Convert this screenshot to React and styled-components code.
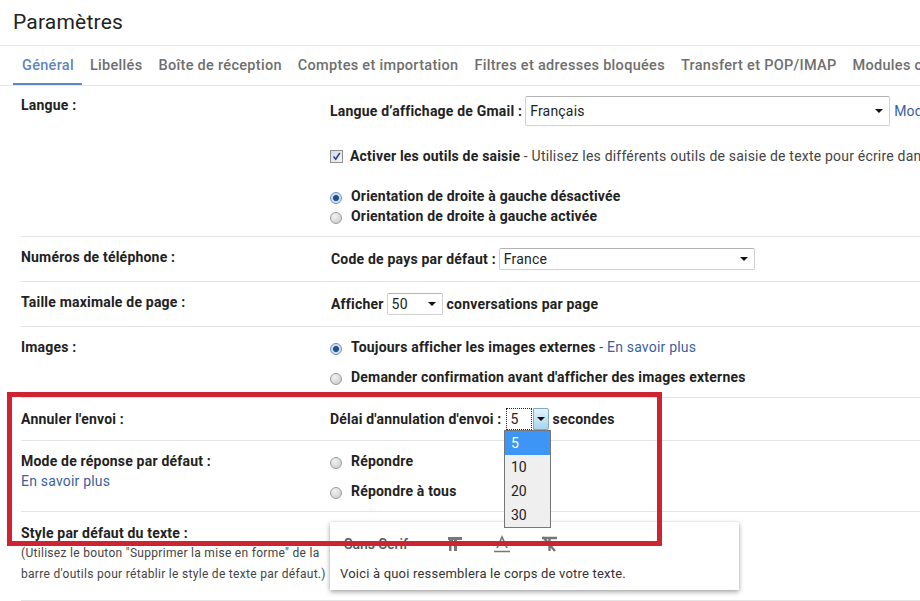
import React from 'react';
import styled, { createGlobalStyle } from 'styled-components';

const Global = createGlobalStyle`
  html, body { margin: 0; padding: 0; background: #fff; overflow: hidden; height: 601px; }
  body { font-family: Roboto, "Liberation Sans", sans-serif; color: #222; font-size: 14px; }
`;
const Page = styled.div`position: relative; width: 920px; height: 601px; overflow: hidden;`;
const Title = styled.h1`
  margin: 0; height: 46px; box-sizing: border-box; padding: 9px 0 0 13px;
  font-size: 21px; line-height: 26px; font-weight: 400; color: #222; letter-spacing: .2px;
  border-bottom: 1px solid #e9e9e9;
`;
const Tabs = styled.nav`
  display: flex; height: 40px; padding-left: 13px; box-sizing: border-box;
  border-bottom: 1px solid #e6e6e6; white-space: nowrap; overflow: hidden;
`;
const Tab = styled.div`
  height: 39px; box-sizing: border-box; padding: 1px 8px 0; margin-left: ${p => p.$active ? '0' : '0'};
  line-height: 38px; font-size: 14.5px; font-weight: 500; letter-spacing: .3px;
  color: ${p => p.$active ? '#5f86bd' : '#6f6f6f'};
  border-bottom: ${p => p.$active ? '2px solid #5f86bd' : '0'};
  flex: none;
  &:first-child { padding-left: 9px; }
`;
const Row = styled.section`
  display: grid; grid-template-columns: 309px 1fr; margin-left: 21px;
  height: ${p => p.$h}px; border-bottom: 1px solid #e4e4e4;
  box-sizing: border-box; white-space: nowrap; letter-spacing: .2px;
`;
const Label = styled.div`padding-top: ${p => p.$top}px; line-height: 20px;`;
const Strong = styled.div`font-weight: 700; font-size: 14px; color: #222;`;
const Link = styled.a`color: #3a5f9f; font-weight: 400;`;
const Hint = styled.div`font-size: 12px; line-height: 21px; color: #444; letter-spacing: .3px;`;
const Values = styled.div`display: flex; flex-direction: column; padding-top: ${p => p.$top}px; min-width: 0;`;
const Line = styled.div`
  display: flex; align-items: center; height: ${p => p.$h || 20}px; margin-top: ${p => p.$mt || 0}px;
  margin-left: ${p => p.$ml || 0}px; gap: 4px;
  font-weight: 700; color: #222;
`;
const Plain = styled.span`font-weight: 400; color: #444;`;
const Select = styled.div`
  display: flex; align-items: center; justify-content: space-between; box-sizing: border-box;
  width: ${p => p.$w}px; height: ${p => p.$h || 22}px; padding: 0 6px 0 4px; margin-left: -1px;
  border: 1px solid #d0d0d0; border-top-color: #b4b4b4; border-radius: 2px; background: #fff;
  font-weight: 400; color: #222; flex: none;
`;
const Arrow = styled.i`width: 0; height: 0; border: 4px solid transparent; border-top: 4px solid #111; border-bottom: 0; display: block;`;
const FocusSelect = styled.div`
  display: flex; gap: 1px; width: 43px; height: 22px; box-sizing: border-box; flex: none;
`;
const FocusValue = styled.div`
  flex: 1; box-sizing: border-box; border: 1px dotted #222; font-weight: 400; padding-left: 4px; line-height: 20px; height: 22px;
`;
const FocusBtn = styled.div`
  width: 16px; height: 22px; box-sizing: border-box; display: flex; align-items: center; justify-content: center;
  border: 1px solid #7fa8c9; border-radius: 0 2px 2px 0; background: linear-gradient(#e5f3fb, #a9d4ee);
`;
const Menu = styled.ul`
  position: absolute; left: 504px; top: 430px; width: 47px; margin: 0; padding: 0; list-style: none;
  background: #efefef; border: 1px solid #767676; box-sizing: border-box; z-index: 3;
`;
const Option = styled.li`
  height: 24px; line-height: 24px; padding-left: 6px; font-size: 14px; color: ${p => p.$on ? '#fff' : '#222'};
  background: ${p => p.$on ? '#3d96f5' : 'transparent'};
`;
const Check = styled.span`
  display: block; width: 13px; height: 13px; box-sizing: border-box; flex: none; margin-right: 3px;
  border: 1px solid #8e8f8f; background: linear-gradient(135deg, #d4d8e8, #f5f6fa);
  position: relative;
  svg { position: absolute; left: 1px; top: 1px; }
`;
const Radio = styled.span`
  display: block; width: 12px; height: 12px; border-radius: 50%; box-sizing: border-box; flex: none; margin: 3px 5px 0 0;
  border: 1px solid ${p => p.$on ? '#6b8db5' : '#9c9c9c'};
  background: ${p => p.$on ? 'radial-gradient(circle, #1f4f86 0 2.6px, #c9dcf0 3.4px, #e6eff8 100%)' : 'radial-gradient(circle at 35% 30%, #f2f2f2, #c8c8c8)'};
`;
const Card = styled.div`
  position: absolute; left: 330px; top: 522px; width: 409px; height: 68px; background: #fff; z-index: 1;
  box-shadow: 0 2px 5px rgba(0,0,0,.35), 0 0 2px rgba(0,0,0,.08);
  display: flex; flex-direction: column; box-sizing: border-box; padding: 12px 10px 0;
`;
const Toolbar = styled.div`display: flex; align-items: center; height: 20px;`;
const Font = styled.span`width: 105px; padding-left: 4px; color: #555; font-weight: 500; font-size: 14px; box-sizing: border-box;`;
const Tool = styled.span`display: flex; width: 47px; height: 20px; align-items: center;`;
const Sample = styled.div`margin-top: 12px; font-size: 13px; color: #333; letter-spacing: .2px;`;
const RedBox = styled.div`
  position: absolute; left: 7px; top: 392px; width: 655px; height: 154px; box-sizing: border-box;
  border: 5px solid #cf2331; z-index: 4; pointer-events: none;
`;

const checkMark = (
  <svg width="9" height="9" viewBox="0 0 9 9"><path d="M1.5 4.5 L3.7 7.2 L7.8 1" fill="none" stroke="#2b3f8c" strokeWidth="1.5" /></svg>
);

export default function App() {
  return (
    <Page>
      <Global />
      <Title>Paramètres</Title>
      <Tabs>
        <Tab $active>Général</Tab>
        <Tab>Libellés</Tab>
        <Tab>Boîte de réception</Tab>
        <Tab>Comptes et importation</Tab>
        <Tab>Filtres et adresses bloquées</Tab>
        <Tab>Transfert et POP/IMAP</Tab>
        <Tab>Modules complémentaires</Tab>
      </Tabs>
      <Row $h={151}>
        <Label $top={9}><Strong>Langue :</Strong></Label>
        <Values $top={10}>
          <Line $h={30}>
            <span>Langue d’affichage de Gmail :</span>
            <Select $w={365} $h={30}>Français<Arrow /></Select>
            <Link>Modifier</Link>
          </Line>
          <Line $mt={20} $h={20}>
            <Check>{checkMark}</Check>
            <span>Activer les outils de saisie<Plain> - Utilisez les différents outils de saisie de texte pour écrire dans la langue de votre choix</Plain></span>
          </Line>
          <Line $mt={20}><Radio $on /><span>Orientation de droite à gauche désactivée</span></Line>
          <Line><Radio /><span>Orientation de droite à gauche activée</span></Line>
        </Values>
      </Row>
      <Row $h={45}>
        <Label $top={10}><Strong>Numéros de téléphone :</Strong></Label>
        <Values $top={11}>
          <Line $h={22} $ml={1}>
            <span>Code de pays par défaut :</span>
            <Select $w={256}>France<Arrow /></Select>
          </Line>
        </Values>
      </Row>
      <Row $h={45}>
        <Label $top={10}><Strong>Taille maximale de page :</Strong></Label>
        <Values $top={11}>
          <Line $h={22} $ml={1}>
            <span>Afficher</span>
            <Select $w={56}>50<Arrow /></Select>
            <span>conversations par page</span>
          </Line>
        </Values>
      </Row>
      <Row $h={71}>
        <Label $top={10}><Strong>Images :</Strong></Label>
        <Values $top={10}>
          <Line><Radio $on /><span>Toujours afficher les images externes<Plain> - </Plain><Link>En savoir plus</Link></span></Line>
          <Line $mt={10}><Radio /><span>Demander confirmation avant d'afficher des images externes</span></Line>
        </Values>
      </Row>
      <Row $h={43}>
        <Label $top={11}><Strong>Annuler l'envoi :</Strong></Label>
        <Values $top={10}>
          <Line $h={22}>
            <span>Délai d'annulation d'envoi :</span>
            <FocusSelect><FocusValue>5</FocusValue><FocusBtn><Arrow /></FocusBtn></FocusSelect>
            <span>secondes</span>
          </Line>
        </Values>
      </Row>
      <Row $h={71}>
        <Label $top={10}><Strong>Mode de réponse par défaut :</Strong><Link>En savoir plus</Link></Label>
        <Values $top={10}>
          <Line><Radio /><span>Répondre</span></Line>
          <Line $mt={10}><Radio /><span>Répondre à tous</span></Line>
        </Values>
      </Row>
      <Row $h={89}>
        <Label $top={11}>
          <Strong>Style par défaut du texte :</Strong>
          <Hint>(Utilisez le bouton "Supprimer la mise en forme" de la<br />barre d'outils pour rétablir le style de texte par défaut.)</Hint>
        </Label>
        <div />
      </Row>
      <Menu>
        <Option $on>5</Option>
        <Option>10</Option>
        <Option>20</Option>
        <Option>30</Option>
      </Menu>
      <Card>
        <Toolbar>
          <Font>Sans Serif</Font>
          <Tool>
            <svg width="20" height="20" viewBox="0 0 20 20" fill="#777"><path d="M3 3h14v3h-5v11H9V6H8v3H6.500v8H4V6H3z" /></svg>
          </Tool>
          <Tool>
            <svg width="20" height="20" viewBox="0 0 20 20" fill="none" stroke="#777"><path strokeWidth="1.7" d="M5 14 L10 3 L15 14 M7 10h6" /><path strokeWidth="1.500" d="M2 17.500h16" /></svg>
          </Tool>
          <Tool>
            <svg width="20" height="20" viewBox="0 0 20 20" fill="none" stroke="#777" strokeWidth="2.400"><path d="M3 4h15M10.500 4v13M4 3l12 14" /></svg>
          </Tool>
        </Toolbar>
        <Sample>Voici à quoi ressemblera le corps de votre texte.</Sample>
      </Card>
      <RedBox />
    </Page>
  );
}
